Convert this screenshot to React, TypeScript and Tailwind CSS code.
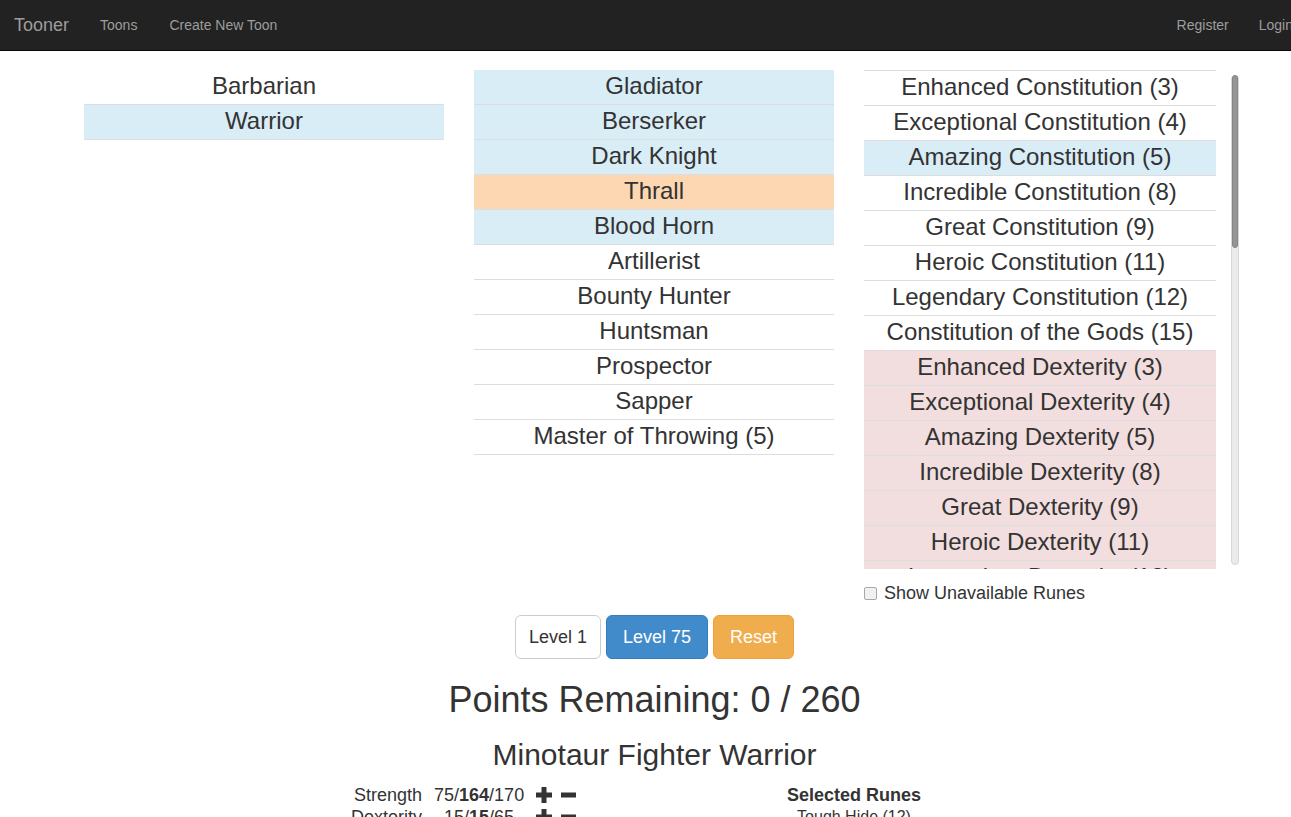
import React from 'react';

type Row = { label: string; tone?: 'info' | 'warn' | 'danger' };

const classes: Row[] = [
  { label: 'Barbarian' },
  { label: 'Warrior', tone: 'info' },
];

const specs: Row[] = [
  { label: 'Gladiator', tone: 'info' },
  { label: 'Berserker', tone: 'info' },
  { label: 'Dark Knight', tone: 'info' },
  { label: 'Thrall', tone: 'warn' },
  { label: 'Blood Horn', tone: 'info' },
  { label: 'Artillerist' },
  { label: 'Bounty Hunter' },
  { label: 'Huntsman' },
  { label: 'Prospector' },
  { label: 'Sapper' },
  { label: 'Master of Throwing (5)' },
];

const runes: Row[] = [
  { label: 'Enhanced Constitution (3)' },
  { label: 'Exceptional Constitution (4)' },
  { label: 'Amazing Constitution (5)', tone: 'info' },
  { label: 'Incredible Constitution (8)' },
  { label: 'Great Constitution (9)' },
  { label: 'Heroic Constitution (11)' },
  { label: 'Legendary Constitution (12)' },
  { label: 'Constitution of the Gods (15)' },
  { label: 'Enhanced Dexterity (3)', tone: 'danger' },
  { label: 'Exceptional Dexterity (4)', tone: 'danger' },
  { label: 'Amazing Dexterity (5)', tone: 'danger' },
  { label: 'Incredible Dexterity (8)', tone: 'danger' },
  { label: 'Great Dexterity (9)', tone: 'danger' },
  { label: 'Heroic Dexterity (11)', tone: 'danger' },
  { label: 'Legendary Dexterity (12)', tone: 'danger' },
  { label: 'Dexterity of the Gods (15)', tone: 'danger' },
];

const stats = [
  { name: 'Strength', base: '75', cur: '164', max: '170' },
  { name: 'Dexterity', base: '15', cur: '15', max: '65' },
];

const toneBg = (tone?: Row['tone']) => {
  if (tone === 'info') return 'bg-[#d9edf7]';
  if (tone === 'warn') return 'bg-[#fdd7b2]';
  if (tone === 'danger') return 'bg-[#f2dede]';
  return 'bg-white';
};

const ListCol = ({ rows }: { rows: Row[] }) => (
  <div className="w-[360px] shrink-0">
    {rows.map((r) => (
      <div
        key={r.label}
        className={`h-[35px] pb-[2px] flex items-center justify-center border-b border-[#dddddd] text-[24px] ${toneBg(r.tone)}`}
      >
        {r.label}
      </div>
    ))}
  </div>
);

const Plus = () => (
  <svg width="16" height="16" viewBox="0 0 16 16" fill="#333">
    <rect x="5.5" y="0" width="5" height="16" />
    <rect x="0" y="5.5" width="16" height="5" />
  </svg>
);

const Minus = () => (
  <svg width="15" height="16" viewBox="0 0 15 16" fill="#333">
    <rect x="0" y="5.5" width="15" height="5" />
  </svg>
);

export default function App() {
  return (
    <div className="min-h-screen bg-white text-[#333] font-['Liberation_Sans',Arial,sans-serif]">
      {/* navbar */}
      <nav className="h-[51px] bg-[#222222] border-b border-[#080808] flex items-center overflow-hidden">
        <span className="pl-[14px] pr-[15px] text-[18px] text-[#9d9d9d]">Tooner</span>
        <ul className="flex text-[14px] text-[#9d9d9d]">
          <li className="px-[16px]">Toons</li>
          <li className="px-[16px]">Create New Toon</li>
        </ul>
        <ul className="flex ml-auto mr-[-17px] shrink-0 text-[14px] text-[#9d9d9d]">
          <li className="px-[15px]">Register</li>
          <li className="px-[15px]">Login</li>
        </ul>
      </nav>

      <main className="pt-[19px]">
        <div className="flex gap-[30px] ml-[84px]">
          <ListCol rows={classes} />
          <ListCol rows={specs} />

          <div className="w-[377px] shrink-0">
            <div className="flex h-[499px]">
              <div className="w-[352px] overflow-hidden">
                {runes.map((r) => (
                  <div
                    key={r.label}
                    className={`h-[35px] pb-[2px] flex items-center justify-center border-t border-[#dddddd] text-[24px] ${toneBg(r.tone)}`}
                  >
                    {r.label}
                  </div>
                ))}
              </div>
              {/* scrollbar */}
              <div className="ml-[15px] mt-[5px] h-[490px] w-[8px] rounded-full bg-[#ebebeb] border border-[#d6d6d6] flex flex-col">
                <div className="h-[173px] w-full rounded-full bg-[#959595] border border-[#868686] -mt-px" />
              </div>
            </div>
            <label className="mt-[12px] h-[24px] flex items-center gap-[7px] text-[18px]">
              <span className="w-[13px] h-[13px] rounded-[2px] border border-[#a9a9a9] bg-[#f1f1f1]" />
              Show Unavailable Runes
            </label>
          </div>
        </div>

        <div className="pl-[18px]">
          <div className="mt-[10px] flex justify-center gap-[5px] text-[18px]">
            <button className="h-[44px] px-[13px] rounded-[6px] border border-[#cccccc] bg-white text-[#333]">Level 1</button>
            <button className="h-[44px] px-[16px] rounded-[6px] border border-[#357ebd] bg-[#428bca] text-white">Level 75</button>
            <button className="h-[44px] px-[16px] rounded-[6px] border border-[#eea236] bg-[#f0ad4e] text-white">Reset</button>
          </div>

          <h1 className="mt-[21px] text-center text-[36px] leading-[40px]">Points Remaining: 0 / 260</h1>
          <h2 className="mt-[18px] text-center text-[30px] leading-[34px]">Minotaur Fighter Warrior</h2>
        </div>

        <div className="mt-[12px] flex pl-[340px] text-[18px] leading-[22px]">
          <div className="grid grid-cols-[82px_90px_auto] gap-x-[12px]">
            {stats.map((s) => (
              <React.Fragment key={s.name}>
                <div className="text-right">{s.name}</div>
                <div className="text-center">
                  {s.base}/<b>{s.cur}</b>/{s.max}
                </div>
                <div className="flex items-center gap-[9px]">
                  <Plus />
                  <Minus />
                </div>
              </React.Fragment>
            ))}
          </div>
          <div className="ml-[178px] w-[200px] text-center">
            <div className="font-bold">Selected Runes</div>
            <div className="text-[16px]">Tough Hide (12)</div>
          </div>
        </div>
      </main>
    </div>
  );
}
